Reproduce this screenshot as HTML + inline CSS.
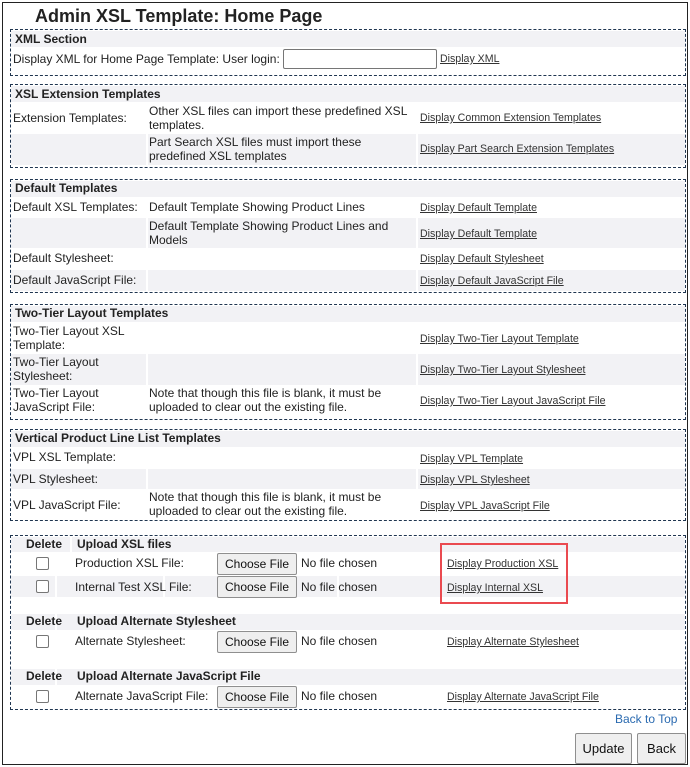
<!DOCTYPE html>
<html><head><meta charset="utf-8"><style>
*{margin:0;padding:0;box-sizing:border-box}
body{width:690px;height:767px;background:#fff;font-family:"Liberation Sans",Arial,sans-serif;font-size:12px;color:#222;position:relative;overflow:hidden}
.frame{position:absolute;left:2px;top:2px;width:686px;height:763px;border:1px solid #222}
.a{position:absolute;white-space:nowrap;line-height:14px}
.box{position:absolute;left:10px;width:676px;border:1px dashed #1f3550}
.g{position:absolute;left:11px;width:674px;background:#f2f2f5}
.gap{position:absolute;width:2px;background:#fff}
.b{font-weight:bold}
.l{color:#333;text-decoration:underline;font-size:10.6px}
.btn{position:absolute;height:22px;border:1px solid #8f8f8f;border-radius:2px;background:#efefef;font-size:12px;text-align:center;line-height:20px;color:#111}
.cb{position:absolute;width:13px;height:13px;border:1px solid #767676;border-radius:2px;background:#fff}
</style></head><body>
<div class="frame"></div>
<div class="a b" style="left:35px;top:6px;font-size:18px;line-height:20px">Admin XSL Template: Home Page</div>

<div class="box" style="top:29px;height:47px"></div>
<div class="g" style="top:31px;height:16px"></div>
<div class="a b" style="left:15px;top:32px">XML Section</div>
<div class="a" style="left:13px;top:52px">Display XML for Home Page Template: User login:</div>
<div style="position:absolute;left:283px;top:49px;width:154px;height:20px;border:1px solid #767676;border-radius:2px"></div>
<div class="a l" style="left:440px;top:52px">Display XML</div>

<div class="box" style="top:84px;height:84px"></div>
<div class="g" style="top:86px;height:16px"></div>
<div class="a b" style="left:15px;top:87px">XSL Extension Templates</div>
<div class="a" style="left:13px;top:111px">Extension Templates:</div>
<div class="a" style="left:149px;top:104px">Other XSL files can import these predefined XSL<br>templates.</div>
<div class="a l" style="left:420px;top:111px">Display Common Extension Templates</div>
<div class="g" style="top:134px;height:31px"></div><div class="gap" style="left:146px;top:134px;height:31px"></div><div class="gap" style="left:416px;top:134px;height:31px"></div>
<div class="a" style="left:149px;top:135px">Part Search XSL files must import these<br>predefined XSL templates</div>
<div class="a l" style="left:420px;top:142px">Display Part Search Extension Templates</div>

<div class="box" style="top:179px;height:114px"></div>
<div class="g" style="top:181px;height:16px"></div>
<div class="a b" style="left:15px;top:181px">Default Templates</div>
<div class="a" style="left:13px;top:200px">Default XSL Templates:</div>
<div class="a" style="left:149px;top:200px">Default Template Showing Product Lines</div>
<div class="a l" style="left:420px;top:201px">Display Default Template</div>
<div class="g" style="top:218px;height:30px"></div><div class="gap" style="left:146px;top:218px;height:30px"></div><div class="gap" style="left:416px;top:218px;height:30px"></div>
<div class="a" style="left:149px;top:219px">Default Template Showing Product Lines and<br>Models</div>
<div class="a l" style="left:420px;top:227px">Display Default Template</div>
<div class="a" style="left:13px;top:251px">Default Stylesheet:</div>
<div class="a l" style="left:420px;top:252px">Display Default Stylesheet</div>
<div class="g" style="top:270px;height:21px"></div><div class="gap" style="left:146px;top:270px;height:21px"></div><div class="gap" style="left:416px;top:270px;height:21px"></div>
<div class="a" style="left:13px;top:273px">Default JavaScript File:</div>
<div class="a l" style="left:420px;top:274px">Display Default JavaScript File</div>

<div class="box" style="top:304px;height:116px"></div>
<div class="g" style="top:306px;height:16px"></div>
<div class="a b" style="left:15px;top:306px">Two-Tier Layout Templates</div>
<div class="a" style="left:13px;top:324px">Two-Tier Layout XSL<br>Template:</div>
<div class="a l" style="left:420px;top:332px">Display Two-Tier Layout Template</div>
<div class="g" style="top:354px;height:31px"></div><div class="gap" style="left:146px;top:354px;height:31px"></div><div class="gap" style="left:416px;top:354px;height:31px"></div>
<div class="a" style="left:13px;top:355px">Two-Tier Layout<br>Stylesheet:</div>
<div class="a l" style="left:420px;top:363px">Display Two-Tier Layout Stylesheet</div>
<div class="a" style="left:13px;top:386px">Two-Tier Layout<br>JavaScript File:</div>
<div class="a" style="left:149px;top:386px">Note that though this file is blank, it must be<br>uploaded to clear out the existing file.</div>
<div class="a l" style="left:420px;top:394px">Display Two-Tier Layout JavaScript File</div>

<div class="box" style="top:429px;height:92px"></div>
<div class="g" style="top:431px;height:16px"></div>
<div class="a b" style="left:15px;top:431px">Vertical Product Line List Templates</div>
<div class="a" style="left:13px;top:450px">VPL XSL Template:</div>
<div class="a l" style="left:420px;top:452px">Display VPL Template</div>
<div class="g" style="top:469px;height:20px"></div><div class="gap" style="left:146px;top:469px;height:20px"></div><div class="gap" style="left:416px;top:469px;height:20px"></div>
<div class="a" style="left:13px;top:472px">VPL Stylesheet:</div>
<div class="a l" style="left:420px;top:473px">Display VPL Stylesheet</div>
<div class="a" style="left:13px;top:498px">VPL JavaScript File:</div>
<div class="a" style="left:149px;top:490px">Note that though this file is blank, it must be<br>uploaded to clear out the existing file.</div>
<div class="a l" style="left:420px;top:499px">Display VPL JavaScript File</div>

<div class="box" style="top:535px;height:175px"></div>
<div class="g" style="top:537px;height:15px"></div><div class="gap" style="left:70px;top:537px;height:15px"></div>
<div class="a b" style="left:26px;top:537px">Delete</div>
<div class="a b" style="left:77px;top:537px">Upload XSL files</div>
<div class="cb" style="left:36px;top:557px"></div>
<div class="a" style="left:75px;top:556px">Production XSL File:</div>
<div class="btn" style="left:217px;top:553px;width:80px">Choose File</div>
<div class="a" style="left:301px;top:556px">No file chosen</div>
<div class="a l" style="left:447px;top:557px">Display Production XSL</div>
<div class="g" style="top:576px;height:21px"></div><div class="gap" style="left:55px;top:576px;height:21px"></div><div class="gap" style="left:163px;top:576px;height:21px"></div><div class="gap" style="left:337px;top:576px;height:21px"></div>
<div class="cb" style="left:36px;top:580px"></div>
<div class="a" style="left:75px;top:580px">Internal Test XSL File:</div>
<div class="btn" style="left:217px;top:576px;width:80px">Choose File</div>
<div class="a" style="left:301px;top:580px">No file chosen</div>
<div class="a l" style="left:447px;top:581px">Display Internal XSL</div>
<div style="position:absolute;left:440px;top:543px;width:128px;height:61px;border:2px solid #ea4a50"></div>

<div class="g" style="top:614px;height:16px"></div><div class="gap" style="left:55px;top:614px;height:16px"></div>
<div class="a b" style="left:26px;top:614px">Delete</div>
<div class="a b" style="left:77px;top:614px">Upload Alternate Stylesheet</div>
<div class="cb" style="left:36px;top:635px"></div>
<div class="a" style="left:75px;top:634px">Alternate Stylesheet:</div>
<div class="btn" style="left:217px;top:631px;width:80px">Choose File</div>
<div class="a" style="left:301px;top:634px">No file chosen</div>
<div class="a l" style="left:447px;top:635px">Display Alternate Stylesheet</div>

<div class="g" style="top:669px;height:16px"></div><div class="gap" style="left:55px;top:669px;height:16px"></div>
<div class="a b" style="left:26px;top:669px">Delete</div>
<div class="a b" style="left:77px;top:669px">Upload Alternate JavaScript File</div>
<div class="cb" style="left:36px;top:690px"></div>
<div class="a" style="left:75px;top:689px">Alternate JavaScript File:</div>
<div class="btn" style="left:217px;top:686px;width:80px">Choose File</div>
<div class="a" style="left:301px;top:689px">No file chosen</div>
<div class="a l" style="left:447px;top:690px">Display Alternate JavaScript File</div>

<div class="a" style="left:615px;top:712px;color:#2a6ab0">Back to Top</div>
<div class="btn" style="left:575px;top:733px;width:57px;height:31px;line-height:29px;font-size:13px">Update</div>
<div class="btn" style="left:637px;top:733px;width:49px;height:31px;line-height:29px;font-size:13px">Back</div>
</body></html>
